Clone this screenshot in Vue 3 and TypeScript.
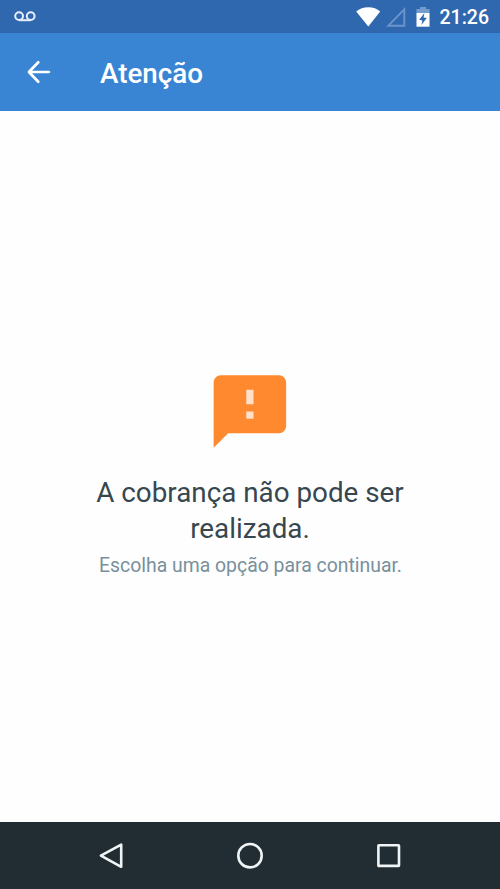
<script setup lang="ts">
const time: string = '21:26'
const title: string = 'Atenção'
const message: string[] = ['A cobrança não pode ser', 'realizada.']
const hint: string = 'Escolha uma opção para continuar.'
</script>

<template>
  <div class="screen">
    <div class="status">
      <svg class="voicemail" width="22" height="12" viewBox="0 0 22 12">
        <g fill="none" stroke="#e6effa" stroke-width="2">
          <circle cx="5.1" cy="5.1" r="3.9" />
          <circle cx="16.7" cy="5.1" r="3.9" />
          <path d="M5.1 9.2H16.7" />
        </g>
      </svg>
      <svg class="wifi" width="25" height="20" viewBox="0 0 25 20">
        <path d="M0.2 4.4C3.4 1.8 7.6 0.2 12.3 0.2S21.2 1.8 24.2 4.4L12.3 19.6Z" fill="#fff" />
      </svg>
      <svg class="signal" width="20" height="20" viewBox="0 0 20 20">
        <path d="M2.3 18.7H18.3V2.3Z" fill="none" stroke="#6b94cb" stroke-width="1.9" />
      </svg>
      <svg class="battery" width="14" height="20" viewBox="0 0 14 20">
        <path d="M4 0H10V2H13.5V7H0.5V2H4Z" fill="#759ccf" />
        <path d="M0.5 6H13.5V19.7H0.5Z" fill="#fff" />
        <path d="M8.4 6L3.2 12.8L6.4 13.4L5.4 17.9L10.8 11L7.6 10.4Z" fill="#3068b0" />
      </svg>
      <span class="time">{{ time }}</span>
    </div>
    <header class="toolbar">
      <svg class="back" width="34" height="34" viewBox="0 0 24 24">
        <path d="M19 12H5.3M11.5 5.1L4.9 12L11.5 18.9" fill="none" stroke="#fff" stroke-width="1.9" stroke-linecap="round" stroke-linejoin="round" />
      </svg>
      <h1>{{ title }}</h1>
    </header>
    <main class="content">
      <svg class="feedback" width="87" height="87" viewBox="0.17 0 24 24">
        <path d="M10.5 5.5H13.5V14.5H10.5Z" fill="#ffe1cb" />
        <path d="M20 2H4C2.9 2 2.01 2.9 2.01 4L2 22L6 18H20C21.1 18 22 17.1 22 16V4C22 2.9 21.1 2 20 2ZM13 14H11V12H13V14ZM13 10H11V6H13V10Z" fill="#ff892f" />
      </svg>
      <p class="message">
        <span v-for="line in message" :key="line">{{ line }}</span>
      </p>
      <p class="hint">{{ hint }}</p>
    </main>
    <nav class="navbar">
      <svg width="28" height="28" viewBox="0 0 28 28">
        <path d="M3.9 13.7L24.2 2.7V24.8Z" />
      </svg>
      <svg width="28" height="28" viewBox="0 0 28 28">
        <circle cx="14" cy="13.7" r="11.7" />
      </svg>
      <svg width="28" height="28" viewBox="0 0 28 28">
        <rect x="3.4" y="3.3" width="20.6" height="20.6" rx="0.5" />
      </svg>
    </nav>
  </div>
</template>

<style>
body {
  margin: 0;
  background: #fff;
}
</style>

<style scoped>
.screen {
  display: flex;
  flex-direction: column;
  width: 500px;
  height: 889px;
  overflow: hidden;
  background: #fefefe;
  font-family: Roboto, "Liberation Sans", sans-serif;
}
svg {
  display: block;
  flex: none;
}
.status {
  display: flex;
  flex: none;
  box-sizing: border-box;
  height: 33px;
  padding: 7px 11px 0 14px;
  background: #3068b0;
}
.voicemail {
  margin: 4px auto 0 0;
}
.signal {
  margin-left: 5px;
}
.battery {
  margin-left: 10px;
}
.time {
  margin-left: 10px;
  color: #fff;
  font-size: 19.5px;
  font-weight: 500;
  line-height: 22px;
}
.toolbar {
  display: flex;
  flex: none;
  align-items: center;
  box-sizing: border-box;
  height: 78px;
  padding-left: 22px;
  background: #3985d3;
}
h1 {
  margin: 4px 0 0 44px;
  color: #fff;
  font-size: 27.8px;
  font-weight: 500;
  line-height: 34px;
}
.content {
  display: flex;
  flex: 1;
  flex-direction: column;
  align-items: center;
  padding-top: 257px;
}
.message {
  margin: 20px 0 0;
  color: #37474f;
  font-size: 27.8px;
  line-height: 36px;
  text-align: center;
}
.message span {
  display: block;
}
.hint {
  margin: 6px 0 0;
  padding-left: 1px;
  color: #78909c;
  font-size: 19.4px;
  line-height: 26px;
}
.navbar {
  display: flex;
  flex: none;
  align-items: center;
  justify-content: center;
  gap: 111px;
  height: 67px;
  background: #212d33;
}
.navbar svg {
  fill: none;
  stroke: #f0f4f5;
  stroke-width: 2.6;
  stroke-linejoin: round;
}
</style>
